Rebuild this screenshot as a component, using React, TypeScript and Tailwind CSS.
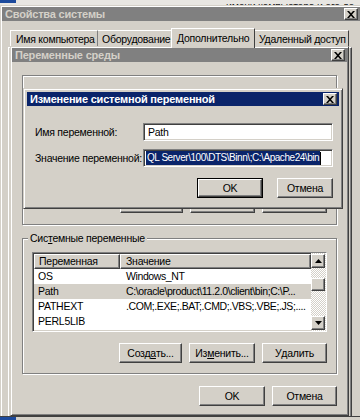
import React from "react";

const raised =
  "border border-white border-r-[#404040] border-b-[#404040] shadow-[inset_-1px_-1px_0_#808080]";
const sunken =
  "border border-[#808080] border-r-white border-b-white shadow-[inset_1px_1px_0_#404040,inset_-1px_-1px_0_#d4d0c8]";
const frame =
  "border border-[#d4d0c8] border-r-[#404040] border-b-[#404040] shadow-[inset_1px_1px_0_#fff,inset_-1px_-1px_0_#808080]";

function CloseBtn() {
  return (
    <span className={`flex h-[12px] w-[14px] items-center justify-center bg-[#d4d0c8] ${raised}`}>
      <svg width="8" height="7" viewBox="0 0 8 7">
        <path d="M0 0h2l2 2.2L6 0h2L5 3.5 8 7H6L4 4.8 2 7H0l3-3.5z" fill="#000" />
      </svg>
    </span>
  );
}

function TitleBar({ text, active }: { text: string; active?: boolean }) {
  return (
    <div
      className={`flex h-[14px] items-center justify-between pl-[3px] pr-[2px] ${
        active ? "bg-[#0a246a] text-white" : "bg-[#808080] text-[#d4d0c8]"
      }`}
    >
      <span className="whitespace-nowrap text-[11px] font-bold leading-none tracking-[-0.2px]">{text}</span>
      <CloseBtn />
    </div>
  );
}

function Btn({ children, w, def }: { children: React.ReactNode; w: string; def?: boolean }) {
  const inner = (
    <span className={`flex h-full w-full items-center justify-center whitespace-nowrap bg-[#d4d0c8] ${raised}`}>
      {children}
    </span>
  );
  return def ? (
    <span className={`flex h-[20px] ${w} border border-black`}>{inner}</span>
  ) : (
    <span className={`flex h-[20px] ${w}`}>{inner}</span>
  );
}

function Arrow({ up }: { up?: boolean }) {
  return (
    <span className={`flex h-[14px] w-[14px] items-center justify-center bg-[#d4d0c8] ${raised}`}>
      <svg width="7" height="4" viewBox="0 0 7 4">
        <path d={up ? "M3.5 0L7 4H0z" : "M0 0h7L3.5 4z"} fill="#000" />
      </svg>
    </span>
  );
}

const rows = [
  { name: "OS", value: "Windows_NT" },
  { name: "Path", value: "C:\\oracle\\product\\11.2.0\\client\\bin;C:\\P...", sel: true },
  { name: "PATHEXT", value: ".COM;.EXE;.BAT;.CMD;.VBS;.VBE;.JS;...." },
  { name: "PERL5LIB", value: "" },
];

export default function App() {
  return (
    <div className="relative h-[420px] w-[360px] overflow-hidden bg-[#d4d0c8] font-['Liberation_Sans',Arial,sans-serif] text-[10.5px] leading-none tracking-[-0.25px] text-black">
      {/* desktop behind */}
      <div className="flex h-[5px] items-end overflow-hidden bg-[#e8e6e2]">
        <span className="h-[3px] w-[16px] self-start bg-[#1c4a9c]" />
        <span className="ml-auto mr-[6px] translate-y-[6px] whitespace-nowrap text-[#222]">
          имени компьютера и его де
        </span>
      </div>

      {/* System properties */}
      <div className={`absolute left-0 top-[5px] h-[420px] w-[362px] bg-[#d4d0c8] p-[1px] ${frame}`}>
        <TitleBar text="Свойства системы" />
        <div className="mt-[7px] flex items-end whitespace-nowrap pl-[8px]">
          <span className="flex h-[17px] w-[88px] items-center border-l border-r border-t border-white border-r-[#808080] pl-[5px]">
            Имя компьютера
          </span>
          <span className="flex h-[17px] w-[73px] items-center border-t border-white pl-[4px]">Оборудование</span>
          <span className="z-10 -mb-[1px] flex h-[20px] w-[84px] items-center border-l border-r border-t border-white border-r-[#404040] bg-[#d4d0c8] pb-[1px] pl-[5px]">
            Дополнительно
          </span>
          <span className="flex h-[17px] w-[94px] items-center border-r border-t border-white border-r-[#404040] pl-[4px]">
            Удаленный доступ
          </span>
        </div>
        <div className="ml-[6px] h-[400px] w-[344px] border border-white border-r-[#404040] shadow-[inset_-1px_0_0_#808080]" />
      </div>

      {/* Environment variables */}
      <div className={`absolute left-[10px] top-[46px] flex h-[370px] w-[339px] flex-col bg-[#d4d0c8] p-[1px] ${frame}`}>
        <TitleBar text="Переменные среды" />
        <div className="ml-[10px] mt-[13px] flex h-[150px] w-[315px] flex-col items-end justify-end border border-[#808080] px-[9px] pb-[11px] shadow-[1px_1px_0_#fff,inset_1px_1px_0_#fff]">
          <div className="flex gap-[7px]">
            <Btn w="w-[63px]">Создать...</Btn>
            <Btn w="w-[65px]">Изменить...</Btn>
            <Btn w="w-[65px]">Удалить</Btn>
          </div>
        </div>

        <div className="relative ml-[10px] mt-[13px] flex h-[136px] w-[315px] flex-col border border-[#808080] px-[9px] pb-[10px] pt-[13px] shadow-[1px_1px_0_#fff,inset_1px_1px_0_#fff]">
          <span className="absolute -top-[6px] left-[5px] whitespace-nowrap bg-[#d4d0c8] px-[2px]">
            Сис<u>т</u>емные переменные
          </span>
          <div className={`flex h-[80px] w-[295px] bg-white ${sunken}`}>
            <div className="flex min-w-0 flex-1 flex-col overflow-hidden pl-[1px] pt-[1px]">
              <div className="flex h-[15px]">
                <span className={`flex w-[86px] items-center bg-[#d4d0c8] pl-[4px] ${raised}`}>Переменная</span>
                <span className={`flex flex-1 items-center bg-[#d4d0c8] pl-[5px] ${raised}`}>Значение</span>
              </div>
              {rows.map((r) => (
                <div key={r.name} className={`flex h-[15px] items-center ${r.sel ? "bg-[#d4d0c8]" : ""}`}>
                  <span className="w-[86px] shrink-0 pl-[4px]">{r.name}</span>
                  <span className="flex-1 whitespace-nowrap pl-[6px] tracking-[-0.4px]">{r.value}</span>
                </div>
              ))}
            </div>
            <div className="flex w-[15px] flex-col bg-[repeating-conic-gradient(#d4d0c8_0%_25%,#fff_0%_50%)] bg-[length:2px_2px] pb-[1px] pt-[1px]">
              <Arrow up />
              <span className={`mt-[10px] h-[13px] w-[14px] bg-[#d4d0c8] ${raised}`} />
              <span className="flex-1" />
              <Arrow />
            </div>
          </div>
          <div className="mt-[11px] flex justify-end gap-[7px]">
            <Btn w="w-[63px]">
              Созд<u>а</u>ть...
            </Btn>
            <Btn w="w-[66px]">
              Из<u>м</u>енить...
            </Btn>
            <Btn w="w-[65px]">
              У<u>д</u>алить
            </Btn>
          </div>
        </div>

        <div className="mr-[10px] mt-[12px] flex justify-end gap-[7px]">
          <span className="flex h-[22px]">
            <Btn w="w-[66px]">OK</Btn>
          </span>
          <Btn w="w-[65px]">Отмена</Btn>
        </div>
      </div>

      {/* Edit system variable */}
      <div className={`absolute left-[23px] top-[88px] flex h-[121px] w-[320px] flex-col bg-[#d4d0c8] p-[3px] ${frame}`}>
        <TitleBar text="Изменение системной переменной" active />
        <div className="mt-[17px] flex items-center pl-[8px]">
          <span className="w-[108px] whitespace-nowrap">Имя переменной:</span>
          <span className={`flex h-[18px] w-[190px] items-center bg-white pl-[4px] ${sunken}`}>Path</span>
        </div>
        <div className="mt-[8px] flex items-center pl-[8px]">
          <span className="w-[108px] whitespace-nowrap">Значение переменной:</span>
          <span className={`flex h-[18px] w-[190px] items-center overflow-hidden bg-white pl-[2px] ${sunken}`}>
            <span className="whitespace-nowrap bg-[#0a246a] px-[1px] py-[2px] text-[10px] tracking-[-0.45px] text-white">
              QL Server\100\DTS\Binn\;C:\Apache24\bin
            </span>
            <span className="h-[13px] w-[1px] shrink-0 bg-black" />
          </span>
        </div>
        <div className="mt-[11px] flex gap-[14px] pl-[170px]">
          <Btn w="w-[66px]" def>
            OK
          </Btn>
          <Btn w="w-[56px]">Отмена</Btn>
        </div>
      </div>

      {/* taskbar edge */}
      <div className="absolute bottom-0 left-0 flex h-[4px] w-full border-t border-[#404040] bg-[#d4d0c8]">
        <span className="h-full w-[16px] bg-[#1c4a9c]" />
      </div>
    </div>
  );
}
